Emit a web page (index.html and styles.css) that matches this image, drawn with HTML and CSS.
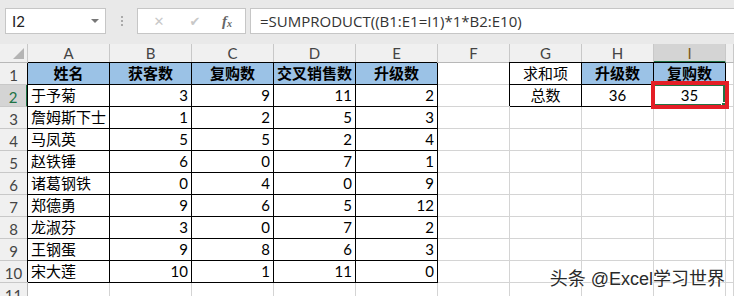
FILE: index.html
```html
<!DOCTYPE html>
<html lang="zh-CN">
<head>
    <meta charset="UTF-8">
    <title>Excel</title>
    <link rel="stylesheet" href="styles.css">
</head>
<body>
    <div class="formula-bar">
        <div class="name-box">I2<span class="drop"></span></div>
        <div class="grip"><i></i><i></i><i></i></div>
        <div class="fx-box">
            <span class="btn">&#x2715;</span>
            <span class="btn">&#x2714;</span>
            <span class="fx">f<sub>x</sub></span>
        </div>
        <div class="formula">=SUMPRODUCT((B1:E1=I1)*1*B2:E10)</div>
    </div>

    <div class="sheet">
        <div class="ch corner"><span class="tri"></span></div>
        <div class="ch">A</div><div class="ch">B</div><div class="ch">C</div><div class="ch">D</div><div class="ch">E</div>
        <div class="ch">F</div><div class="ch">G</div><div class="ch">H</div><div class="ch sel-col">I</div><div class="ch"></div>

        <div class="rh">1</div>
        <div class="c t hd">姓名</div><div class="c t hd">获客数</div><div class="c t hd">复购数</div><div class="c t hd">交叉销售数</div><div class="c t hd">升级数</div>
        <div class="c"></div><div class="c t mid">求和项</div><div class="c t hd">升级数</div><div class="c t hd">复购数</div><div class="c"></div>

        <div class="rh sel-row">2</div>
        <div class="c t name">于予菊</div><div class="c t num">3</div><div class="c t num">9</div><div class="c t num">11</div><div class="c t num">2</div>
        <div class="c"></div><div class="c t mid">总数</div><div class="c t mid">36</div>
        <div class="c t mid active">35<span class="sel"></span><span class="mark"></span></div><div class="c"></div>

        <div class="rh">3</div>
        <div class="c t name">詹姆斯下士</div><div class="c t num">1</div><div class="c t num">2</div><div class="c t num">5</div><div class="c t num">3</div>
        <div class="c"></div><div class="c"></div><div class="c"></div><div class="c"></div><div class="c"></div>

        <div class="rh">4</div>
        <div class="c t name">马凤英</div><div class="c t num">5</div><div class="c t num">5</div><div class="c t num">2</div><div class="c t num">4</div>
        <div class="c"></div><div class="c"></div><div class="c"></div><div class="c"></div><div class="c"></div>

        <div class="rh">5</div>
        <div class="c t name">赵铁锤</div><div class="c t num">6</div><div class="c t num">0</div><div class="c t num">7</div><div class="c t num">1</div>
        <div class="c"></div><div class="c"></div><div class="c"></div><div class="c"></div><div class="c"></div>

        <div class="rh">6</div>
        <div class="c t name">诸葛钢铁</div><div class="c t num">0</div><div class="c t num">4</div><div class="c t num">0</div><div class="c t num">9</div>
        <div class="c"></div><div class="c"></div><div class="c"></div><div class="c"></div><div class="c"></div>

        <div class="rh">7</div>
        <div class="c t name">郑德勇</div><div class="c t num">9</div><div class="c t num">6</div><div class="c t num">5</div><div class="c t num">12</div>
        <div class="c"></div><div class="c"></div><div class="c"></div><div class="c"></div><div class="c"></div>

        <div class="rh">8</div>
        <div class="c t name">龙淑芬</div><div class="c t num">3</div><div class="c t num">0</div><div class="c t num">7</div><div class="c t num">2</div>
        <div class="c"></div><div class="c"></div><div class="c"></div><div class="c"></div><div class="c"></div>

        <div class="rh">9</div>
        <div class="c t name">王钢蛋</div><div class="c t num">9</div><div class="c t num">8</div><div class="c t num">6</div><div class="c t num">3</div>
        <div class="c"></div><div class="c"></div><div class="c"></div><div class="c"></div><div class="c"></div>

        <div class="rh">10</div>
        <div class="c t name">宋大莲</div><div class="c t num">10</div><div class="c t num">1</div><div class="c t num">11</div><div class="c t num">0</div>
        <div class="c"></div><div class="c"></div><div class="c"></div><div class="c"></div><div class="c"></div>

        <div class="rh">11</div>
        <div class="c"></div><div class="c"></div><div class="c"></div><div class="c"></div><div class="c"></div>
        <div class="c"></div><div class="c"></div><div class="c"></div><div class="c"></div><div class="c"></div>
    </div>

    <div class="watermark">头条 @Excel学习世界</div>
</body>
</html>
```

FILE: styles.css
```css
body {
    margin: 0;
    width: 734px;
    height: 296px;
    overflow: hidden;
    position: relative;
    background: #fff;
    font-family: Lato, "Noto Sans CJK SC", sans-serif;
}
.formula-bar {
    height: 44px;
    background: #e9e9e9;
    display: flex;
    align-items: flex-start;
    padding-top: 8px;
    box-sizing: border-box;
}
.name-box {
    margin-left: 5px;
    width: 101px;
    height: 26px;
    box-sizing: border-box;
    background: #fff;
    border: 1px solid #c6c6c6;
    font-size: 15px;
    line-height: 24px;
    padding-left: 6px;
    color: #222;
    position: relative;
}
.drop {
    position: absolute;
    right: 6px;
    top: 10px;
    border-left: 4px solid transparent;
    border-right: 4px solid transparent;
    border-top: 4px solid #777;
}
.grip {
    width: 31px;
    height: 26px;
    display: flex;
    flex-direction: column;
    align-items: center;
    justify-content: center;
    gap: 2px;
}
.grip i {
    width: 2px;
    height: 2px;
    background: #aaa;
}
.fx-box {
    width: 109px;
    height: 26px;
    box-sizing: border-box;
    background: #fff;
    border: 1px solid #c6c6c6;
    display: flex;
    align-items: center;
    padding-left: 12px;
    gap: 18px;
}
.btn {
    color: #c8c8c8;
    font-family: "DejaVu Sans", sans-serif;
    font-size: 13px;
    width: 18px;
    text-align: center;
}
.fx {
    font-family: "Liberation Serif", serif;
    font-style: italic;
    font-weight: bold;
    color: #666;
    font-size: 15px;
}
.fx sub {
    font-size: 10px;
    vertical-align: -1px;
}
.formula {
    margin-left: 4px;
    flex: 1;
    height: 26px;
    box-sizing: border-box;
    background: #fff;
    border: 1px solid #c6c6c6;
    border-right: none;
    font-family: "Open Sans", sans-serif;
    font-size: 15px;
    line-height: 24px;
    padding-left: 9px;
    color: #333;
    white-space: nowrap;
}
.sheet {
    display: grid;
    grid-template-columns: 28px repeat(5, 82px) repeat(4, 72px) 1fr;
    grid-template-rows: 19px repeat(11, 22px);
}
.sheet > div {
    box-sizing: border-box;
    border-right: 1px solid #d4d4d4;
    border-bottom: 1px solid #d4d4d4;
    font-size: 15px;
    line-height: 21px;
    white-space: nowrap;
    overflow: visible;
}
.ch {
    background: #f0f0f0;
    text-align: center;
    color: #444;
    line-height: 18px !important;
    border-right-color: #c8c8c8 !important;
    border-bottom-color: #b8b8b8 !important;
}
.corner {
    position: relative;
}
.tri {
    position: absolute;
    right: 3px;
    bottom: 3px;
    border-left: 11px solid transparent;
    border-bottom: 11px solid #b4b4b4;
}
.sel-col {
    background: #d4d4d4;
    border-bottom: 2px solid #217346 !important;
    color: #7a5a1a;
}
.rh {
    background: #f0f0f0;
    text-align: center;
    color: #444;
    border-right-color: #b8b8b8 !important;
    border-bottom-color: #c8c8c8 !important;
    padding-top: 2px;
}
.sel-row {
    background: #d4d4d4;
    border-right: 2px solid #217346 !important;
    color: #217346;
}
.t {
    border-right-color: #000 !important;
    border-bottom-color: #000 !important;
    box-shadow: -1px -1px 0 #000;
    color: #000;
}
.hd {
    background: #9bc2e6;
    font-weight: bold;
    text-align: center;
}
.mid {
    text-align: center;
}
.name {
    padding-left: 3px;
}
.num {
    text-align: right;
    padding-right: 3px;
}
.active {
    position: relative;
}
.sel {
    position: absolute;
    left: -1px;
    top: -1px;
    right: 0;
    bottom: 0;
    border: 2px solid #217346;
}
.mark {
    position: absolute;
    right: -3px;
    bottom: -3px;
    width: 5px;
    height: 5px;
    background: #217346;
    border: 1px solid #fff;
}
.active::after {
    content: "";
    position: absolute;
    left: -3px;
    top: -4px;
    right: -4px;
    bottom: -3px;
    border: 4px solid #e41e26;
}
.watermark {
    position: absolute;
    right: 9px;
    bottom: 6px;
    font-family: "Liberation Sans", "Noto Sans CJK SC", sans-serif;
    font-size: 18px;
    color: #2a2a2a;
    text-shadow: 0 0 2px #fff, 0 0 2px #fff, 0 0 3px #fff;
}
```
